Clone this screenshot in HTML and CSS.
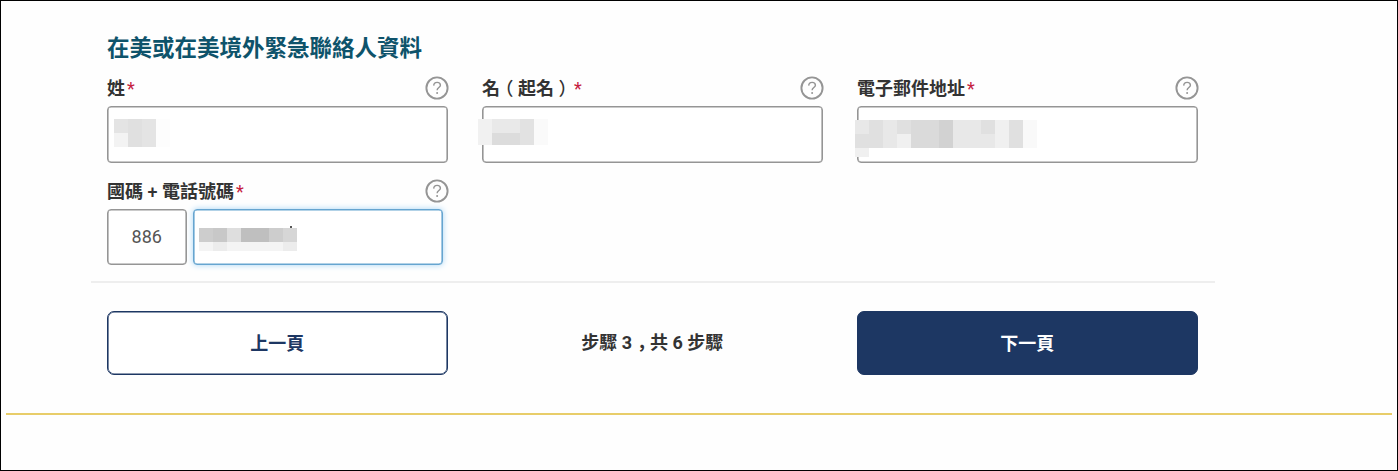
FILE: index.html
```html
<!DOCTYPE html>
<html lang="zh-Hant">
<head>
<meta charset="utf-8">
<title>緊急聯絡人資料</title>
<link rel="stylesheet" href="styles.css">
</head>
<body>
<svg class="defs" aria-hidden="true"><symbol id="help" viewBox="0 0 24 24"><circle cx="12" cy="12" r="10.6" fill="none" stroke="#959595" stroke-width="1.9"/><path d="M8.7 9.6C8.8 7.5 10.2 6.4 12.1 6.4C14 6.4 15.4 7.5 15.4 9.2C15.4 11.5 12.1 11.7 12.1 14.3" fill="none" stroke="#959595" stroke-width="1.4"/><circle cx="12.1" cy="17" r="1" fill="#959595"/></symbol></svg>
<main class="page">
  <section class="form">
    <h1 class="title">在美或在美境外緊急聯絡人資料</h1>
    <div class="grid">
      <div class="field">
        <div class="label"><span>姓<b class="req">*</b></span><svg class="help"><use href="#help"/></svg></div>
        <div class="input"><svg class="mask mask-last" viewBox="0 0 56 28" shape-rendering="crispEdges"><path fill="#e4e4e4" d="M0 0h42v28H0z"/><path fill="#e0e0e0" d="M14 0h14v28H14z"/><path fill="#f3f3f3" d="M0 14h14v14H0z"/><path fill="#fdfdfd" d="M42 0h14v28H42z"/></svg></div>
      </div>
      <div class="field">
        <div class="label"><span>名<i class="paren">（</i>起名<i class="paren">）</i><b class="req">*</b></span><svg class="help"><use href="#help"/></svg></div>
        <div class="input"><svg class="mask mask-first" viewBox="0 0 70 26" shape-rendering="crispEdges"><path fill="#f1f1f1" d="M0 0h14v26H0z"/><path fill="#e9e9e9" d="M14 0h28v14H14z"/><path fill="#dcdcdc" d="M14 14h28v12H14z"/><path fill="#e2e2e2" d="M42 0h14v26H42z"/><path fill="#fafafa" d="M56 0h14v26H56z"/></svg></div>
      </div>
      <div class="field">
        <div class="label"><span>電子郵件地址<b class="req">*</b></span><svg class="help"><use href="#help"/></svg></div>
        <div class="input"><svg class="mask mask-mail" viewBox="0 0 182 37" shape-rendering="crispEdges"><path fill="#e8e8e8" d="M0 0h168v28H0z"/><path fill="#e0e0e0" d="M0 14h14v14H0zM14 0h14v28H14zM42 0h14v14H42zM126 0h14v14H126zM154 0h14v28H154z"/><path fill="#dadada" d="M56 0h28v28H56z"/><path fill="#d2d2d2" d="M84 0h14v28H84z"/><path fill="#f0f0f0" d="M42 14h14v14H42zM140 0h14v28H140zM0 28h14v9H0z"/><path fill="#f9f9f9" d="M168 0h14v28H168z"/></svg></div>
      </div>
      <div class="field">
        <div class="label"><span>國碼 <i class="plus">+</i> 電話號碼<b class="req">*</b></span><svg class="help"><use href="#help"/></svg></div>
        <div class="phone">
          <div class="input code">886</div>
          <div class="input number"><svg class="mask mask-phone" viewBox="0 0 98 25" shape-rendering="crispEdges"><path fill="#cdcdcd" d="M0 2h98v14H0z"/><path fill="#c8c8c8" d="M14 2h14v14H14z"/><path fill="#dedede" d="M28 2h14v14H28z"/><path fill="#bfbfbf" d="M42 2h28v14H42z"/><path fill="#d6d6d6" d="M84 2h14v14H84z"/><path fill="#f4f4f4" d="M0 16h84v9H0z"/><path fill="#ececec" d="M14 16h14v9H14zM84 16h14v9H84z"/><path fill="#555" d="M91 0h2v2h-2z"/></svg></div>
        </div>
      </div>
    </div>
    <div class="rule"></div>
    <div class="nav">
      <div class="btn back">上一頁</div>
      <div class="step">步驟 3<i class="comma" lang="ja">，</i>共 6 步驟</div>
      <div class="btn next">下一頁</div>
    </div>
  </section>
  <div class="gold"></div>
</main>
</body>
</html>
```
FILE: styles.css
```css
* { box-sizing: border-box; }
body { margin: 0; background: #fefefe; color: #333; font: 700 18px/24px Roboto, "Noto Sans CJK TC", sans-serif; }
i { font-style: normal; }
.defs { display: none; }
.page { height: 471px; border: 1px solid #000; padding: 31px 5px 0; }
.form { width: 1091px; margin-left: 101px; }
.title { margin: 0 0 12px; font-size: 22.5px; line-height: 33px; color: #0e536b; }
.grid { display: grid; grid-template-columns: repeat(3, 340.5px); column-gap: 34.5px; row-gap: 17px; }
.label { display: flex; justify-content: space-between; height: 24px; margin-bottom: 5px; white-space: nowrap; }
.help { width: 24px; height: 24px; margin: -1px -1.5px 0 0; }
.paren { padding: 0 4.5px; font-weight: 500; font-feature-settings: "halt"; }
.plus { font-weight: 500; }
.comma { padding: 0 4px 0 5px; font-family: "Noto Sans CJK JP", sans-serif; font-feature-settings: "halt"; line-height: 1; }
.req { margin-left: 2px; color: #c5203e; font-weight: 400; }
.input { position: relative; height: 57px; border: 1px solid #959595; border-radius: 4px; background: #fff; box-shadow: inset 0 0 0 .6px #959595; }
.phone { display: flex; gap: 6px; }
.code { width: 79.5px; height: 56px; text-align: center; line-height: 54px; font-weight: 400; color: #555; }
.number { width: 250px; height: 56px; border-color: #66a5d0; box-shadow: inset 0 0 0 .6px #66a5d0, 0 0 6px #a9d6f5; }
.mask { position: absolute; display: block; }
.mask-last { left: 6px; top: 12px; width: 56px; height: 28px; }
.mask-first { left: -5px; top: 12px; width: 70px; height: 26px; }
.mask-mail { left: -3px; top: 13px; width: 182px; height: 37px; }
.mask-phone { left: 5px; top: 16px; width: 98px; height: 25px; }
.rule { width: 1124px; height: 2px; margin: 16px 0 28px -16px; background: #eee; }
.nav { display: grid; grid-template-columns: repeat(3, 340.5px); gap: 34.5px; height: 64px; text-align: center; line-height: 64px; }
.btn { height: 64px; border: 1px solid #1d3763; border-radius: 7px; box-shadow: inset 0 0 0 .6px #1d3763; }
.back { color: #1d3763; background: #fff; }
.next { color: #fff; background: #1d3763; }
.gold { height: 2px; margin-top: 38px; background: #e8cd69; }
```
